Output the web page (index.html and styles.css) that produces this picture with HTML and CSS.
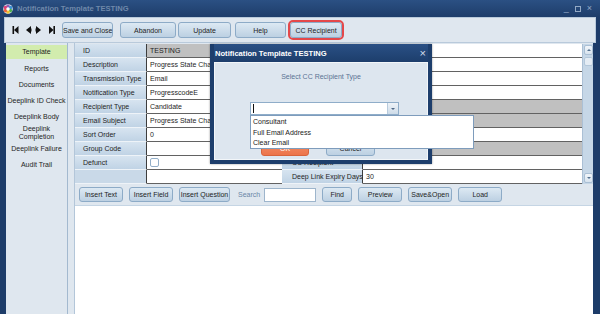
FILE: index.html
```html
<!DOCTYPE html>
<html lang="en">

<head>
    <meta charset="UTF-8">
    <title>Notification Template TESTING</title>
    <link rel="stylesheet" href="styles.css">
</head>

<body>
    <div class="window">
        <div class="titlebar">
            <svg class="app-icon" viewBox="0 0 10 10">
                <circle cx="5" cy="5" r="4.8" fill="#dfe9f3"/>
                <circle cx="5" cy="2.2" r="1.8" fill="#8e5bb5"/>
                <circle cx="7.6" cy="3.6" r="1.8" fill="#3d8fd6"/>
                <circle cx="7.4" cy="6.6" r="1.8" fill="#4cae4c"/>
                <circle cx="5" cy="7.9" r="1.8" fill="#f0c330"/>
                <circle cx="2.5" cy="6.6" r="1.8" fill="#e8643a"/>
                <circle cx="2.4" cy="3.6" r="1.8" fill="#d8417a"/>
                <circle cx="5" cy="5" r="1.7" fill="#fff"/>
            </svg>
            <span class="title">Notification Template TESTING</span>
            <div class="win-controls">
                <span>_</span>
                <span class="max"></span>
                <span>&#215;</span>
            </div>
        </div>

        <div class="toolbar">
            <svg class="nav-arrows" viewBox="0 0 45 10">
                <rect x="1.5" y="1" width="1.6" height="8" fill="#111"/>
                <polygon points="7.5,1 3,5 7.5,9" fill="#111"/>
                <polygon points="20,1 15,5 20,9" fill="#111"/>
                <rect x="19" y="3.5" width="1.5" height="3" fill="#111"/>
                <polygon points="25,1 30,5 25,9" fill="#111"/>
                <rect x="24.5" y="3.5" width="1.5" height="3" fill="#111"/>
                <polygon points="38,1 42.5,5 38,9" fill="#111"/>
                <rect x="42.4" y="1" width="1.6" height="8" fill="#111"/>
            </svg>
            <button class="btn w-save">Save and Close</button>
            <button class="btn w-abandon">Abandon</button>
            <button class="btn w-update">Update</button>
            <button class="btn w-help">Help</button>
            <button class="btn w-cc marked">CC Recipient</button>
        </div>

        <div class="content">
            <ul class="side-nav">
                <li class="active">Template</li>
                <li>Reports</li>
                <li>Documents</li>
                <li>Deeplink ID Check</li>
                <li>Deeplink Body</li>
                <li>Deeplink<br>Completion</li>
                <li>Deeplink Failure</li>
                <li>Audit Trail</li>
            </ul>

            <div class="main">
                <div class="record-wrap">
                    <div class="record-grid">
                        <div class="lbl">ID</div>
                        <div class="val grey">TESTING</div>
                        <div class="lbl r"></div>
                        <div class="val"></div>

                        <div class="lbl">Description</div>
                        <div class="val">Progress State Change</div>
                        <div class="lbl r"></div>
                        <div class="val"></div>

                        <div class="lbl">Transmission Type</div>
                        <div class="val">Email</div>
                        <div class="lbl r"></div>
                        <div class="val"></div>

                        <div class="lbl">Notification Type</div>
                        <div class="val">ProgresscodeE</div>
                        <div class="lbl r"></div>
                        <div class="val"></div>

                        <div class="lbl">Recipient Type</div>
                        <div class="val">Candidate</div>
                        <div class="lbl r"></div>
                        <div class="val grey"></div>

                        <div class="lbl">Email Subject</div>
                        <div class="val">Progress State Change</div>
                        <div class="lbl r"></div>
                        <div class="val grey"></div>

                        <div class="lbl">Sort Order</div>
                        <div class="val">0</div>
                        <div class="lbl r"></div>
                        <div class="val"></div>

                        <div class="lbl">Group Code</div>
                        <div class="val"></div>
                        <div class="lbl r"></div>
                        <div class="val grey"></div>

                        <div class="lbl">Defunct</div>
                        <div class="val"><span class="check"></span></div>
                        <div class="lbl r">CC Recipient</div>
                        <div class="val"></div>

                        <div class="lbl blank"></div>
                        <div class="val"></div>
                        <div class="lbl r">Deep Link Expiry Days</div>
                        <div class="val">30</div>
                    </div>
                    <div class="scrollbar">
                        <div class="sb-btn up"></div>
                        <div class="sb-thumb"></div>
                        <div class="sb-btn down"></div>
                    </div>
                </div>

                <div class="editor-bar">
                    <button class="btn w-44">Insert Text</button>
                    <button class="btn w-44">Insert Field</button>
                    <button class="btn w-51">Insert Question</button>
                    <span class="search-label">Search</span>
                    <input class="search-input" type="text">
                    <button class="btn w-30">Find</button>
                    <button class="btn w-44">Preview</button>
                    <button class="btn w-44">Save&amp;Open</button>
                    <button class="btn w-44">Load</button>
                </div>

                <div class="editor"></div>
            </div>
        </div>

        <div class="dialog">
            <div class="dialog-head">
                <span>Notification Template TESTING</span>
                <span class="close">&#215;</span>
            </div>
            <div class="dialog-body">
                <p class="prompt">Select CC Recipient Type</p>
                <div class="combo">
                    <span class="text-caret"></span>
                    <span class="combo-arrow"></span>
                    <ul class="combo-list">
                        <li>Consultant</li>
                        <li>Full Email Address</li>
                        <li>Clear Email</li>
                    </ul>
                </div>
                <div class="dialog-actions">
                    <button class="btn ok">OK</button>
                    <button class="btn cancel">Cancel</button>
                </div>
            </div>
        </div>
    </div>
</body>

</html>
```

FILE: styles.css
```css
* {
    box-sizing: border-box;
}

body {
    margin: 0;
    background-color: #1c3b68;
    font-family: 'Liberation Sans', Arial, sans-serif;
    font-size: 7px;
    color: #1e1e1e;
}

.window {
    position: relative;
    width: 600px;
    height: 314px;
    display: flex;
    flex-direction: column;
    background: linear-gradient(#2b5083, #1d3c69 18px);
    overflow: hidden;
}

/* Title bar */
.titlebar {
    height: 17px;
    display: flex;
    align-items: center;
    padding: 0 8px 0 3px;
}

.app-icon {
    width: 10px;
    height: 10px;
    margin-right: 4px;
}

.title {
    font-weight: bold;
    font-size: 7.6px;
    color: #6f88aa;
}

.win-controls {
    margin-left: auto;
    display: flex;
    align-items: center;
    gap: 6px;
    color: #93a9c5;
    font-size: 9px;
    line-height: 9px;
}

.win-controls .max {
    width: 6px;
    height: 6px;
    border: 1px solid #93a9c5;
}

/* Toolbar */
.toolbar {
    height: 26px;
    margin: 0 4px;
    padding-left: 6px;
    background-color: #dfe7ef;
    border: 1px solid #b9cadb;
    display: flex;
    align-items: center;
    gap: 4px;
}

.nav-arrows {
    width: 45px;
    height: 10px;
    margin-right: 2px;
}

.btn {
    height: 16px;
    padding: 0;
    border: 1px solid #8dabc7;
    border-radius: 3px;
    background: linear-gradient(#dde9f3, #bcd0e2);
    font: inherit;
    color: #1e1e1e;
    text-align: center;
    white-space: nowrap;
}

.w-save { width: 51px; }
.w-abandon { width: 56px; margin-left: 3px; }
.w-update { width: 53px; margin-left: -2px; }
.w-help { width: 51px; }
.w-cc { width: 52px; }
.w-44 { width: 44px; }
.w-51 { width: 51px; }
.w-30 { width: 30px; }

.btn.marked {
    outline: 2px solid #e4484a;
    outline-offset: 0;
}

/* Content */
.content {
    flex: 1;
    min-height: 0;
    display: flex;
    margin: 0 7px 0 6px;
    background-color: #dfe7ef;
}

.side-nav {
    width: 62px;
    margin: 0;
    padding: 2px 0 0;
    list-style: none;
    border-right: 1px solid #a3b9cf;
}

.side-nav li {
    height: 16px;
    display: flex;
    align-items: center;
    justify-content: center;
    text-align: center;
    line-height: 8.5px;
    white-space: nowrap;
}

.side-nav li.active {
    height: 14px;
    margin-bottom: 2px;
    background-color: #d2ecae;
}

.main {
    flex: 1;
    min-width: 0;
    margin-left: 6px;
    border-left: 1px solid #b3c6d9;
    display: flex;
    flex-direction: column;
}

.record-wrap {
    display: flex;
    height: 140px;
    margin-top: 1px;
}

.record-grid {
    flex: 1;
    display: grid;
    grid-template-columns: 72px 135px 81px 219px;
    grid-auto-rows: 14px;
}

.lbl {
    padding-left: 8px;
    line-height: 13px;
    white-space: nowrap;
    background: linear-gradient(#d7e4f0, #c0d3e5);
    border-bottom: 1px solid #eef3f8;
    border-right: 1px solid #3d3d3d;
}

.lbl.r {
    padding-left: 10px;
}

.lbl.blank {
    background: #c9d9e8;
}

.val {
    padding-left: 3px;
    line-height: 13px;
    white-space: nowrap;
    overflow: hidden;
    background-color: #fff;
    border-bottom: 1px solid #626262;
}

.val.grey {
    background-color: #c0c0c0;
}

.check {
    display: block;
    width: 9px;
    height: 9px;
    margin-top: 2px;
    background-color: #fff;
    border: 1px solid #93aec8;
    border-radius: 2px;
}

.scrollbar {
    width: 11px;
    padding: 1px 0;
    display: flex;
    flex-direction: column;
    align-items: center;
    background-color: #c6d7e7;
    border-left: 1px solid #abc0d5;
}

.sb-btn {
    position: relative;
    width: 9px;
    height: 10px;
    background: linear-gradient(#f2f6fa, #d7e3ee);
    border: 1px solid #a9bfd4;
    border-radius: 2px;
}

.sb-btn::after {
    content: '';
    position: absolute;
    left: 2px;
    top: 3px;
    border-left: 2px solid transparent;
    border-right: 2px solid transparent;
}

.sb-btn.up::after {
    border-bottom: 2px solid #53708f;
}

.sb-btn.down {
    margin-top: auto;
}

.sb-btn.down::after {
    border-top: 2px solid #53708f;
}

.sb-thumb {
    width: 9px;
    height: 9px;
    margin-top: 2px;
    background-color: #e4ecf4;
    border: 1px solid #b3c7da;
    border-radius: 2px;
}

/* Editor */
.editor-bar {
    height: 21px;
    padding-left: 4px;
    display: flex;
    align-items: center;
    gap: 6px;
}

.editor-bar .btn {
    height: 15px;
}

.search-label {
    margin-left: 2px;
    color: #6a86a6;
}

.search-input {
    width: 52px;
    height: 14px;
    margin-left: -2px;
    border: 1px solid #9db5cc;
    background-color: #fff;
}

.editor {
    flex: 1;
    background-color: #fff;
    border-top: 1px solid #c5d5e4;
}

/* Dialog */
.dialog {
    position: absolute;
    left: 210px;
    top: 44px;
    width: 222px;
    height: 120px;
    display: flex;
    flex-direction: column;
    background-color: #1d3e6c;
    border: 4px solid #1d3e6c;
    border-top: 0;
    box-shadow: 0 0 2px rgba(0, 0, 0, 0.4);
}

.dialog-head {
    height: 18px;
    padding: 0 2px 0 1px;
    display: flex;
    align-items: center;
    justify-content: space-between;
    color: #fff;
    font-weight: bold;
    font-size: 7.6px;
    background: linear-gradient(#2a5085, #1d3e6c);
}

.dialog-head .close {
    font-weight: normal;
    font-size: 11px;
    color: #d6dfea;
}

.dialog-body {
    flex: 1;
    padding-top: 9px;
    background-color: #dde6ef;
    border: 1px solid #f2f6f9;
}

.prompt {
    margin: 0;
    line-height: 9px;
    text-align: center;
    color: #5b7393;
}

.combo {
    position: relative;
    width: 149px;
    height: 13px;
    margin: 21px 0 0 35px;
    background-color: #fff;
    border: 1px solid #8fadc9;
}

.text-caret {
    position: absolute;
    left: 2px;
    top: 1px;
    width: 1px;
    height: 9px;
    background-color: #111;
}

.combo-arrow {
    position: absolute;
    right: 0;
    top: 0;
    width: 11px;
    height: 11px;
    background: linear-gradient(#eef3f8, #cddbe8);
    border-left: 1px solid #b8cbdd;
}

.combo-arrow::after {
    content: '';
    position: absolute;
    left: 3px;
    top: 5px;
    border-left: 2px solid transparent;
    border-right: 2px solid transparent;
    border-top: 2px solid #4d6785;
}

.combo-list {
    position: absolute;
    top: 12px;
    left: -1px;
    z-index: 2;
    width: 224px;
    height: 34px;
    margin: 0;
    padding: 1px 2px;
    list-style: none;
    background-color: #fff;
    border: 1px solid #7e9cbc;
}

.combo-list li {
    line-height: 10.5px;
    color: #222;
}

.dialog-actions {
    display: flex;
    gap: 17px;
    margin: 25px 0 0 46px;
}

.dialog-actions .btn {
    height: 16px;
}

.btn.ok {
    width: 48px;
    color: #fff;
    background: linear-gradient(#f3916c, #ec7449);
    border-color: #d8643c;
}

.btn.cancel {
    width: 49px;
}
```
